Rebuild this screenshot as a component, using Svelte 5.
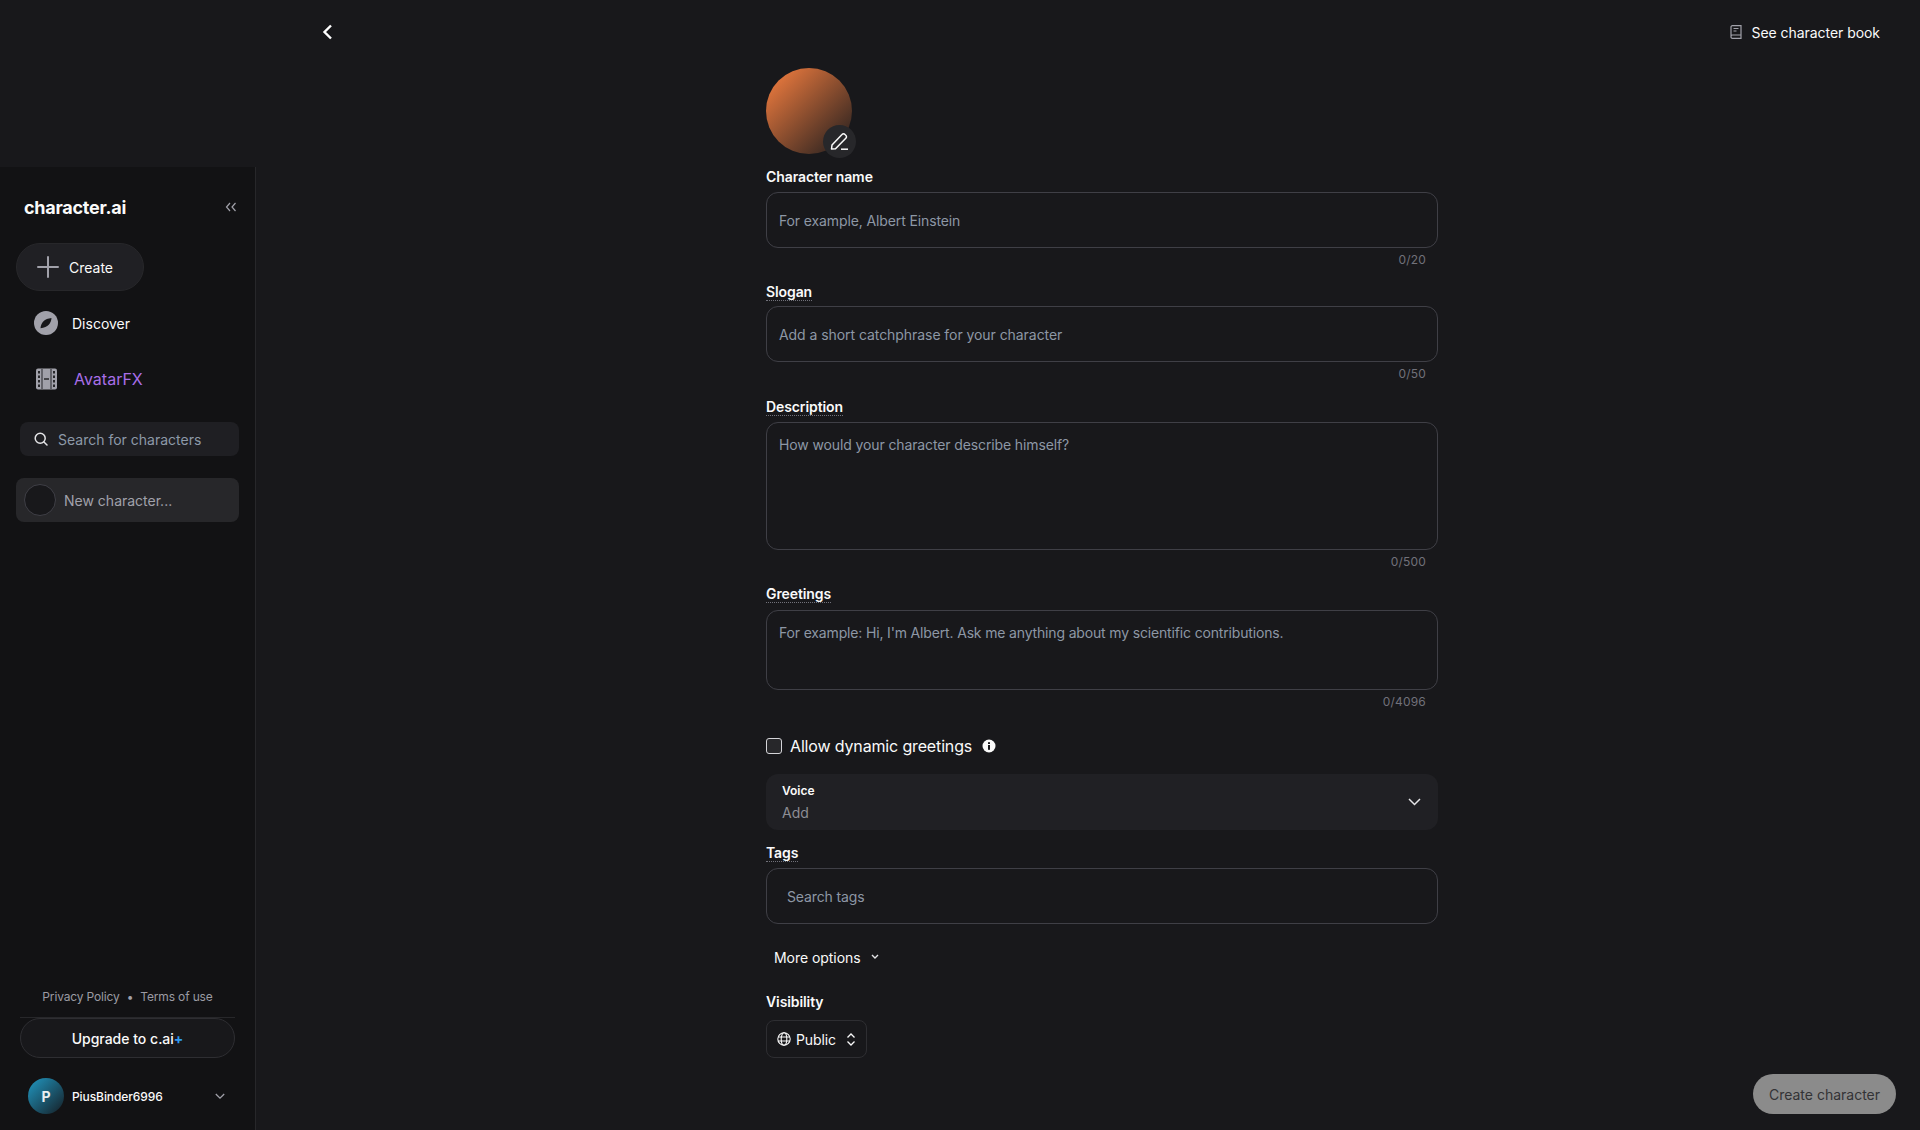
<script>
	const fields = [
		{ label: 'Character name', hint: 'For example, Albert Einstein', count: '0/20', kind: 'name' },
		{ label: 'Slogan', hint: 'Add a short catchphrase for your character', count: '0/50', kind: 'slogan' },
		{ label: 'Description', hint: 'How would your character describe himself?', count: '0/500', kind: 'desc' },
		{ label: 'Greetings', hint: "For example: Hi, I'm Albert. Ask me anything about my scientific contributions.", count: '0/4096', kind: 'greet' }
	];
</script>

<div class="page">
	<aside class="sidebar">
		<div class="brand">
			<span class="logo">character.ai</span>
			<svg class="collapse" width="12" height="10" viewBox="0 0 12 10" fill="none" stroke="#a1a1aa" stroke-width="1.2"><path d="M5 1 1.5 5 5 9M10.5 1 7 5l3.5 4" /></svg>
		</div>

		<button class="create">
			<svg width="22" height="22" viewBox="0 0 22 22" stroke="#a1a1aa" stroke-width="2" stroke-linecap="round"><path d="M11 1v20M1 11h20" /></svg>
			<span>Create</span>
		</button>

		<div class="nav discover">
			<svg width="24" height="24" viewBox="0 0 24 24"><circle cx="12" cy="12" r="12" fill="#a1a1aa" /><path d="M17.500 7c-.2 5-3.500 9.500-11 10.200C6.800 12 10.500 7.600 17.500 7z" fill="#18181b" /></svg>
			<span>Discover</span>
		</div>
		<div class="nav avatarfx">
			<svg width="22" height="22" viewBox="0 0 22 22"><rect width="21" height="21" y=".5" rx="2" fill="#a1a1aa" /><path d="M2 3h2v2.500H2zM2 7.500h2V10H2zM2 12h2v2.500H2zM2 16.500h2V19H2zM17 3h2v2.500h-2zM17 7.500h2V10h-2zM17 12h2v2.500h-2zM17 16.500h2V19h-2z" fill="#27272a" /><path d="M5.500 1h1v20h-1zM14.500 1h1v20h-1zM8 10.200h5v1.600H8z" fill="#27272a" /></svg>
			<span>AvatarFX</span>
		</div>

		<div class="search">
			<svg width="14" height="14" viewBox="0 0 14 14" fill="none" stroke="#e4e4e7" stroke-width="1.500" stroke-linecap="round"><circle cx="6.200" cy="6.200" r="5" /><path d="m10 10 3 3" /></svg>
			<span>Search for characters</span>
		</div>

		<div class="chat">
			<span class="chat-avatar"></span>
			<span>New character...</span>
		</div>

		<div class="side-foot">
			<div class="links"><span>Privacy Policy</span><span class="dot">•</span><span>Terms of use</span></div>
			<button class="upgrade">Upgrade to c.ai<b>+</b></button>
			<div class="user">
				<span class="user-avatar">P</span>
				<span class="user-name">PiusBinder6996</span>
				<svg width="10" height="7" viewBox="0 0 10 7" fill="none" stroke="#a1a1aa" stroke-width="1.300"><path d="m.8 1 4.200 4.200L9.200 1" /></svg>
			</div>
		</div>
	</aside>

	<main class="main">
		<header class="top">
			<svg width="11" height="16" viewBox="0 0 11 16" fill="none" stroke="#fff" stroke-width="2.400"><path d="M9 1.500 2.500 8 9 14.500" /></svg>
			<div class="book">
				<svg width="12" height="14" viewBox="0 0 12 14" fill="none" stroke="#a1a1aa" stroke-width="1.200"><path d="M1 11.500V2a1.300 1.300 0 0 1 1.300-1.300H11v12.600H2.500A1.500 1.500 0 0 1 1 11.500a1.500 1.500 0 0 1 1.500-1.500H11" /><path d="M3.500 3.500h5M3.500 6h3" /></svg>
				<span>See character book</span>
			</div>
		</header>

		<form class="form">
			<div class="avatar">
				<span class="edit">
					<svg width="19" height="19" viewBox="0 0 19 19" fill="none" stroke="#fafafa" stroke-width="1.500" stroke-linejoin="round"><path d="M1.500 17 2 13 12 2.500a2 2 0 0 1 3 0l.8.8a2 2 0 0 1 0 3L5.500 16.800z" /><path d="M11 17.200h7" /></svg>
				</span>
			</div>

			{#each fields as f}
				<div class="field {f.kind}">
					<label class:dotted={f.kind !== 'name'}>{f.label}</label>
					<div class="box">{f.hint}</div>
					<div class="count">{f.count}</div>
				</div>
			{/each}

			<div class="check">
				<span class="checkbox"></span>
				<span>Allow dynamic greetings</span>
				<svg width="14" height="14" viewBox="0 0 14 14"><circle cx="7" cy="7" r="6.500" fill="#fafafa" /><rect x="6" y="6" width="2" height="4.800" fill="#18181b" /><rect x="6" y="3.200" width="2" height="1.800" fill="#18181b" /></svg>
			</div>

			<div class="voice">
				<div>
					<div class="voice-label">Voice</div>
					<div class="voice-add">Add</div>
				</div>
				<svg width="13" height="8" viewBox="0 0 13 8" fill="none" stroke="#e4e4e7" stroke-width="1.500"><path d="m1 1 5.500 5.500L12 1" /></svg>
			</div>

			<label class="dotted tags-label">Tags</label>
			<div class="box tags">Search tags</div>

			<div class="more">
				<span>More options</span>
				<svg width="8" height="6" viewBox="0 0 8 6" fill="none" stroke="#e4e4e7" stroke-width="1.400"><path d="m1 1 3 3 3-3" /></svg>
			</div>

			<label class="vis-label">Visibility</label>
			<div class="public">
				<svg width="14" height="14" viewBox="0 0 14 14" fill="none" stroke="#fafafa" stroke-width="1.100"><circle cx="7" cy="7" r="6.200" /><ellipse cx="7" cy="7" rx="2.800" ry="6.200" /><path d="M1 5h12M1 9h12" /></svg>
				<span>Public</span>
				<svg width="10" height="13" viewBox="0 0 10 13" fill="none" stroke="#fafafa" stroke-width="1.300"><path d="m1.500 4.500 3.500-3.500 3.500 3.500M1.500 8.500 5 12l3.500-3.500" /></svg>
			</div>
		</form>

		<div class="actions">
			<button class="submit">Create character</button>
		</div>
	</main>
</div>

<style>
	:global(body) {
		margin: 0;
		background: #18181b;
	}

	.page {
		display: flex;
		height: 1130px;
		overflow: hidden;
		background: #18181b;
		color: #fafafa;
		font-family: Inter, "Noto Sans", sans-serif;
		font-size: 14px;
	}

	button {
		font-family: inherit;
	}

	.sidebar {
		box-sizing: border-box;
		flex: 0 0 256px;
		height: 963px;
		margin-top: 167px;
		padding: 28px 16px 0;
		display: flex;
		flex-direction: column;
		background: #121214;
		border-right: 1px solid #27272a;
	}

	.brand {
		display: flex;
		align-items: center;
		justify-content: space-between;
		height: 24px;
		padding: 0 2px 0 8px;
	}

	.logo {
		font-size: 18px;
		font-weight: 700;
		letter-spacing: -0.25px;
		color: #fafafa;
	}

	.create {
		display: flex;
		align-items: center;
		gap: 10px;
		width: 128px;
		height: 48px;
		margin-top: 24px;
		padding: 0 0 0 20px;
		background: #202024;
		border: 1px solid #27272a;
		border-radius: 24px;
		color: #fafafa;
		font-size: 14px;
		font-weight: 400;
	}

	.nav {
		display: flex;
		align-items: center;
		height: 24px;
		font-weight: 400;
	}

	.discover {
		margin-top: 20px;
		padding-left: 18px;
		gap: 14px;
	}

	.avatarfx {
		margin-top: 32px;
		padding-left: 20px;
		gap: 16px;
		font-size: 16px;
		color: #a86ee8;
	}

	.search {
		display: flex;
		align-items: center;
		gap: 10px;
		height: 34px;
		margin: 31px 0 0 4px;
		padding-left: 14px;
		background: #1f1f23;
		border-radius: 8px;
		color: #8d99a8;
	}

	.chat {
		display: flex;
		align-items: center;
		gap: 8px;
		height: 44px;
		margin-top: 22px;
		padding-left: 8px;
		background: #27272a;
		border-radius: 8px;
		color: #a1a1aa;
	}

	.chat-avatar {
		width: 30px;
		height: 30px;
		background: #18181b;
		border: 1px solid #3f3f46;
		border-radius: 50%;
	}

	.side-foot {
		margin-top: auto;
		padding: 0 4px 16px;
	}

	.links {
		display: flex;
		justify-content: center;
		gap: 7px;
		padding-bottom: 13px;
		border-bottom: 1px solid #27272a;
		font-size: 12px;
		letter-spacing: -0.15px;
		color: #9b9ba3;
	}

	.dot {
		color: #a1a1aa;
	}

	.upgrade {
		display: block;
		width: 215px;
		height: 40px;
		background: #18181b;
		border: 1px solid #2e2e32;
		border-radius: 20px;
		color: #fafafa;
		font-size: 14px;
		font-weight: 500;
	}

	.upgrade b {
		color: #2f9bf0;
		font-weight: 700;
	}

	.user {
		display: flex;
		align-items: center;
		margin-top: 20px;
		padding: 0 10px 0 8px;
	}

	.user-avatar {
		display: flex;
		align-items: center;
		justify-content: center;
		width: 36px;
		height: 36px;
		border-radius: 50%;
		background: linear-gradient(135deg, #1f86ab 15%, #17303c 85%);
		color: #e8eef0;
		font-size: 14px;
		font-weight: 700;
	}

	.user-name {
		flex: 1;
		margin-left: 8px;
		font-size: 12px;
		font-weight: 500;
		letter-spacing: -0.08px;
	}

	.main {
		position: relative;
		flex: 1;
		min-width: 0;
	}

	.top {
		display: flex;
		align-items: center;
		justify-content: space-between;
		height: 24px;
		padding: 20px 40px 0 66px;
	}

	.book {
		display: flex;
		align-items: center;
		gap: 10px;
		letter-spacing: -0.05px;
	}

	.form {
		width: 672px;
		margin: 24px 0 0 510px;
	}

	.avatar {
		position: relative;
		width: 86px;
		height: 86px;
		border-radius: 50%;
		background: linear-gradient(135deg, #e5773d 10%, #2d2320 92%);
	}

	.edit {
		position: absolute;
		right: -4px;
		bottom: -4px;
		display: flex;
		align-items: center;
		justify-content: center;
		width: 33px;
		height: 33px;
		border-radius: 50%;
		background: #27272a;
	}

	label {
		display: block;
		width: fit-content;
		font-size: 14px;
		font-weight: 600;
		line-height: 17px;
		letter-spacing: -0.1px;
		color: #fafafa;
	}

	.dotted {
		border-bottom: 1px dotted #71717a;
	}

	.field.name {
		margin-top: 14px;
		height: 93px;
	}

	.field.slogan {
		margin-top: 22px;
		height: 94px;
	}

	.field.desc {
		margin-top: 21px;
		height: 165px;
	}

	.field.greet {
		margin-top: 22px;
		height: 133px;
	}

	.field .box {
		margin-top: 6px;
	}

	.field.name .box {
		margin-top: 7px;
	}

	.field.slogan .box {
		margin-top: 5px;
		letter-spacing: -0.06px;
	}

	.field.greet .box {
		margin-top: 7px;
	}

	.box {
		box-sizing: border-box;
		display: flex;
		align-items: center;
		height: 56px;
		padding: 0 12px;
		border: 1px solid #3f3f46;
		border-radius: 12px;
		color: #8d97a5;
		font-size: 14px;
		letter-spacing: -0.12px;
	}

	.desc .box {
		height: 128px;
		align-items: flex-start;
		padding-top: 13px;
	}

	.greet .box {
		height: 80px;
		align-items: flex-start;
		padding-top: 13px;
		letter-spacing: -0.16px;
	}

	.count {
		padding-right: 12px;
		margin-top: 4px;
		text-align: right;
		font-size: 12px;
		line-height: 15px;
		letter-spacing: 0.2px;
		color: #71717a;
	}

	.check {
		display: flex;
		align-items: center;
		gap: 8px;
		height: 20px;
		margin-top: 18px;
		font-size: 16px;
		font-weight: 400;
		letter-spacing: -0.15px;
	}

	.check svg {
		margin-left: 2px;
	}

	.checkbox {
		box-sizing: border-box;
		width: 16px;
		height: 16px;
		background: #27272a;
		border: 1px solid #d4d4d8;
		border-radius: 3px;
	}

	.voice {
		box-sizing: border-box;
		display: flex;
		align-items: center;
		justify-content: space-between;
		height: 56px;
		margin-top: 18px;
		padding: 0 17px 0 16px;
		background: #202024;
		border-radius: 12px;
	}

	.voice-label {
		font-size: 12px;
		font-weight: 600;
		line-height: 16px;
	}

	.voice-add {
		margin-top: 5px;
		line-height: 17px;
		color: #8d8d95;
	}

	.tags-label {
		margin-top: 14px;
	}

	.tags {
		margin-top: 6px;
		padding-left: 20px;
	}

	.more {
		display: flex;
		align-items: center;
		gap: 10px;
		height: 20px;
		margin-top: 23px;
		padding-left: 8px;
		letter-spacing: -0.05px;
	}

	.vis-label {
		margin-top: 26px;
	}

	.public {
		box-sizing: border-box;
		display: flex;
		align-items: center;
		width: 101px;
		height: 38px;
		margin-top: 10px;
		padding-left: 10px;
		gap: 5px;
		border: 1px solid #2e2e32;
		border-radius: 8px;
		letter-spacing: -0.1px;
	}

	.public span {
		margin-right: 5px;
	}

	.actions {
		position: absolute;
		right: 24px;
		bottom: 16px;
	}

	.submit {
		width: 143px;
		height: 40px;
		background: #8b8b8b;
		border: 0;
		border-radius: 20px;
		color: #333336;
		font-size: 14px;
		font-weight: 400;
	}
</style>
